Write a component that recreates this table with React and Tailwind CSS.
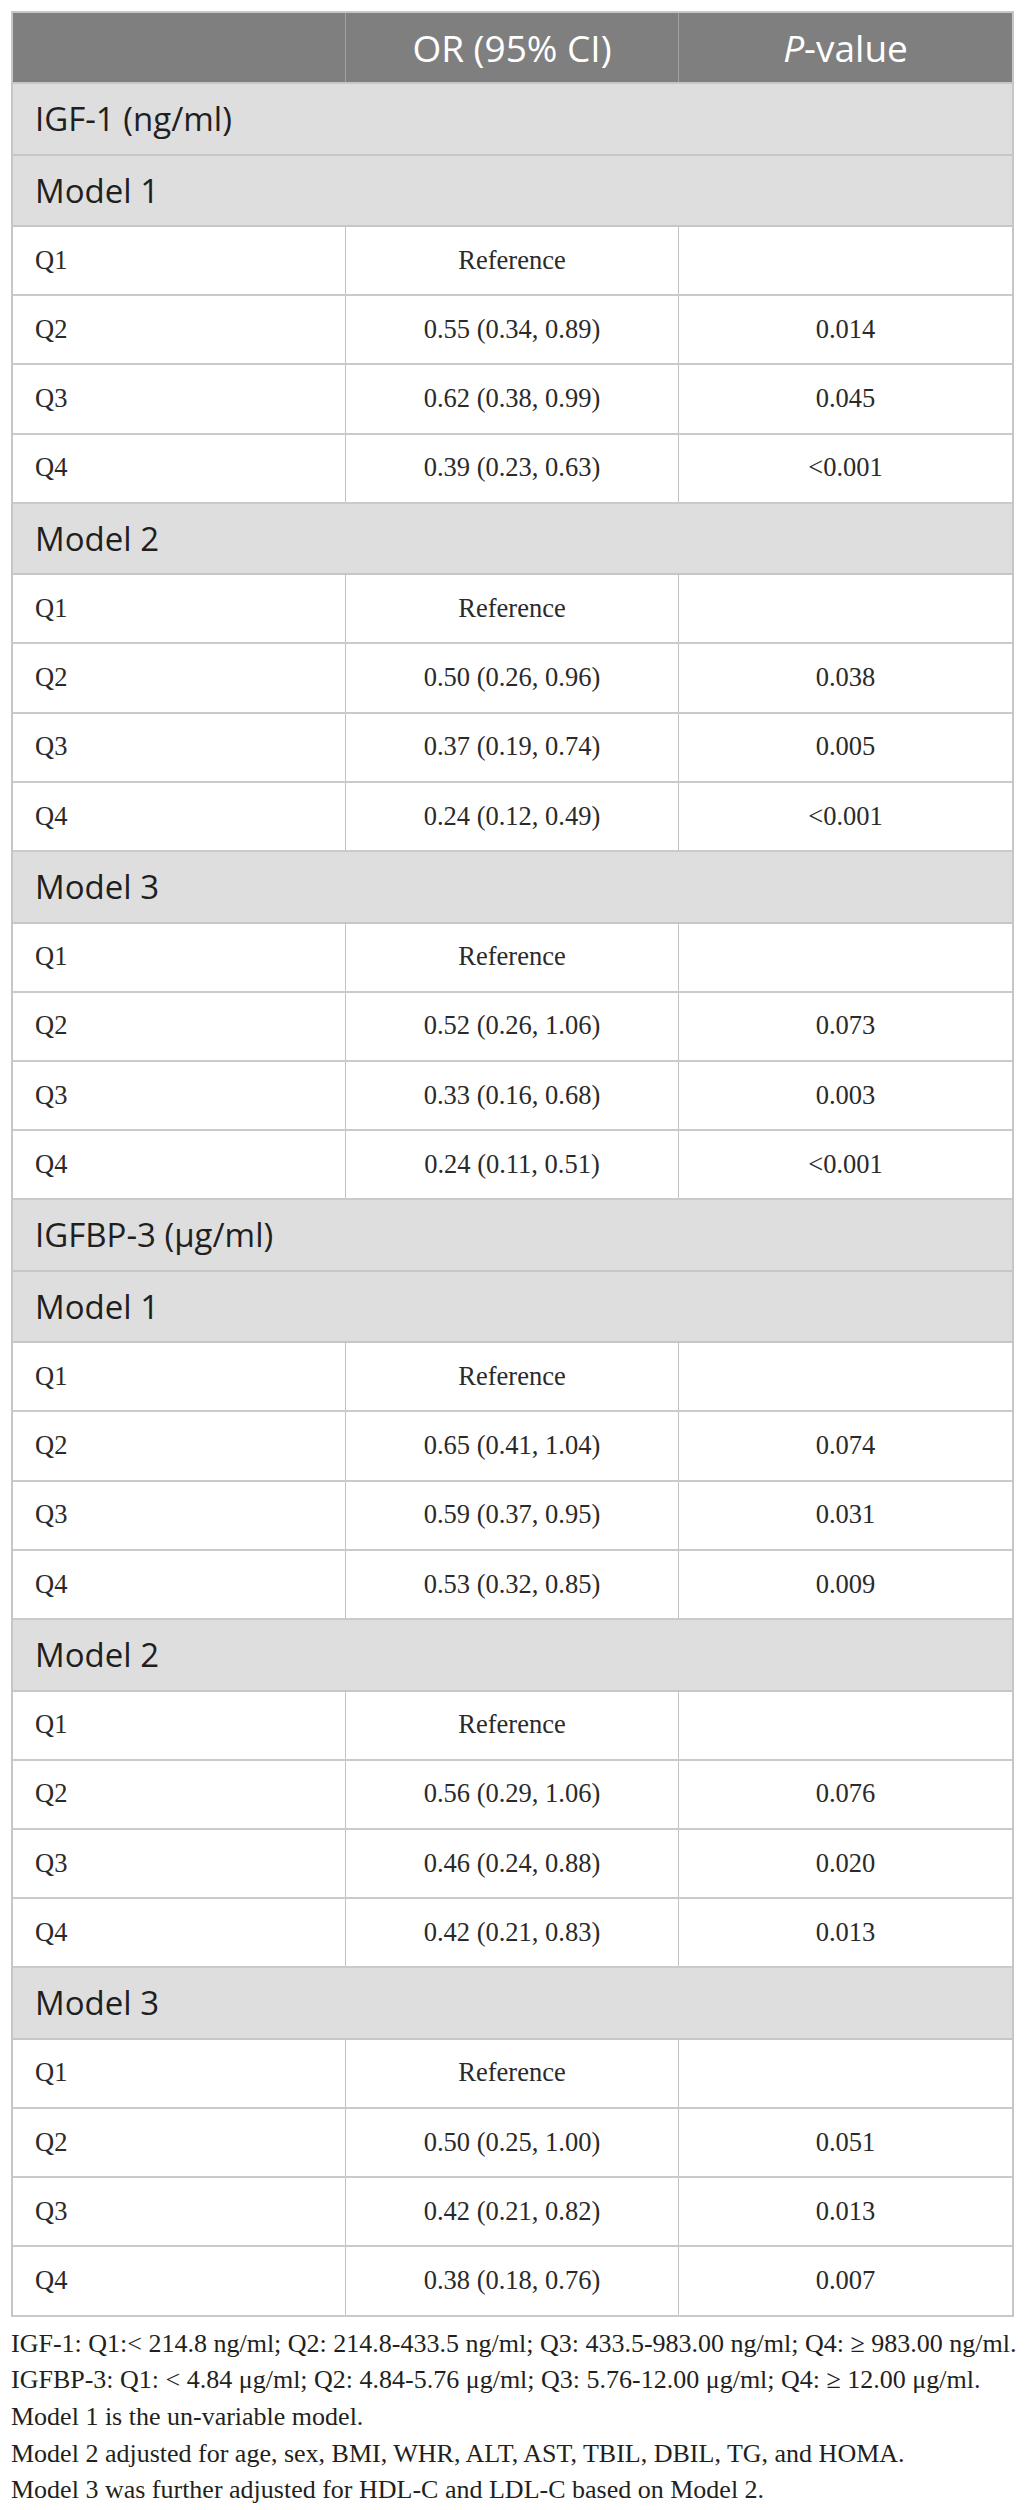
import React from "react";

const sections = [
  {
    title: "IGF-1 (ng/ml)",
    models: [
      {
        name: "Model 1",
        rows: [
          ["Q1", "Reference", ""],
          ["Q2", "0.55 (0.34, 0.89)", "0.014"],
          ["Q3", "0.62 (0.38, 0.99)", "0.045"],
          ["Q4", "0.39 (0.23, 0.63)", "<0.001"],
        ],
      },
      {
        name: "Model 2",
        rows: [
          ["Q1", "Reference", ""],
          ["Q2", "0.50 (0.26, 0.96)", "0.038"],
          ["Q3", "0.37 (0.19, 0.74)", "0.005"],
          ["Q4", "0.24 (0.12, 0.49)", "<0.001"],
        ],
      },
      {
        name: "Model 3",
        rows: [
          ["Q1", "Reference", ""],
          ["Q2", "0.52 (0.26, 1.06)", "0.073"],
          ["Q3", "0.33 (0.16, 0.68)", "0.003"],
          ["Q4", "0.24 (0.11, 0.51)", "<0.001"],
        ],
      },
    ],
  },
  {
    title: "IGFBP-3 (μg/ml)",
    models: [
      {
        name: "Model 1",
        rows: [
          ["Q1", "Reference", ""],
          ["Q2", "0.65 (0.41, 1.04)", "0.074"],
          ["Q3", "0.59 (0.37, 0.95)", "0.031"],
          ["Q4", "0.53 (0.32, 0.85)", "0.009"],
        ],
      },
      {
        name: "Model 2",
        rows: [
          ["Q1", "Reference", ""],
          ["Q2", "0.56 (0.29, 1.06)", "0.076"],
          ["Q3", "0.46 (0.24, 0.88)", "0.020"],
          ["Q4", "0.42 (0.21, 0.83)", "0.013"],
        ],
      },
      {
        name: "Model 3",
        rows: [
          ["Q1", "Reference", ""],
          ["Q2", "0.50 (0.25, 1.00)", "0.051"],
          ["Q3", "0.42 (0.21, 0.82)", "0.013"],
          ["Q4", "0.38 (0.18, 0.76)", "0.007"],
        ],
      },
    ],
  },
];

const notes = [
  "IGF-1: Q1:< 214.8 ng/ml; Q2: 214.8-433.5 ng/ml; Q3: 433.5-983.00 ng/ml; Q4: ≥ 983.00 ng/ml.",
  "IGFBP-3: Q1: < 4.84 μg/ml; Q2: 4.84-5.76 μg/ml; Q3: 5.76-12.00 μg/ml; Q4: ≥ 12.00 μg/ml.",
  "Model 1 is the un-variable model.",
  "Model 2 adjusted for age, sex, BMI, WHR, ALT, AST, TBIL, DBIL, TG, and HOMA.",
  "Model 3 was further adjusted for HDL-C and LDL-C based on Model 2.",
];

const sans = "font-['Open_Sans',sans-serif]";
const serif = "font-['Liberation_Serif',serif]";

// grey band row spanning all columns
const GroupRow = ({ label }) => (
  <div
    className={`h-[71.5px] flex items-center pl-[22px] bg-[#dedede] border-b-2 border-[#c6c6c6] text-[33px] text-[#1f1f1f] ${sans}`}
  >
    {label}
  </div>
);

const DataRow = ({ cells }) => (
  <div
    className={`h-[69.2px] grid grid-cols-3 border-b-2 border-[#cacaca] text-[26.5px] text-[#2a2a2a] ${serif}`}
  >
    <div className="flex items-center pl-[22px] border-r border-[#c2c2c2]">{cells[0]}</div>
    <div className="flex items-center justify-center border-r border-[#c2c2c2]">{cells[1]}</div>
    <div className="flex items-center justify-center">{cells[2]}</div>
  </div>
);

export default function App() {
  return (
    <div className="bg-white w-[1026px] min-h-[2510px] pt-[11px] px-[11px]">
      <div className="w-[1003px] border-x-2 border-t-2 border-[#c6c6c6]">
        {/* header */}
        <div
          className={`h-[71px] grid grid-cols-3 bg-[#7f7f7f] border-b-2 border-[#c6c6c6] text-white text-[37px] ${sans}`}
        >
          <div className="border-r border-[#a2a2a2]" />
          <div className="flex items-center justify-center border-r border-[#a2a2a2]">
            OR (95% CI)
          </div>
          <div className="flex items-center justify-center">
            <span className="italic">P</span>-value
          </div>
        </div>

        {sections.map((s) => (
          <React.Fragment key={s.title}>
            <GroupRow label={s.title} />
            {s.models.map((m) => (
              <React.Fragment key={m.name}>
                <GroupRow label={m.name} />
                {m.rows.map((r) => (
                  <DataRow key={r[0]} cells={r} />
                ))}
              </React.Fragment>
            ))}
          </React.Fragment>
        ))}
      </div>

      <div className={`mt-[9px] text-[26px] leading-[36.7px] text-[#231f20] ${serif}`}>
        {notes.map((n) => (
          <div key={n} className="whitespace-nowrap">
            {n}
          </div>
        ))}
      </div>
    </div>
  );
}
